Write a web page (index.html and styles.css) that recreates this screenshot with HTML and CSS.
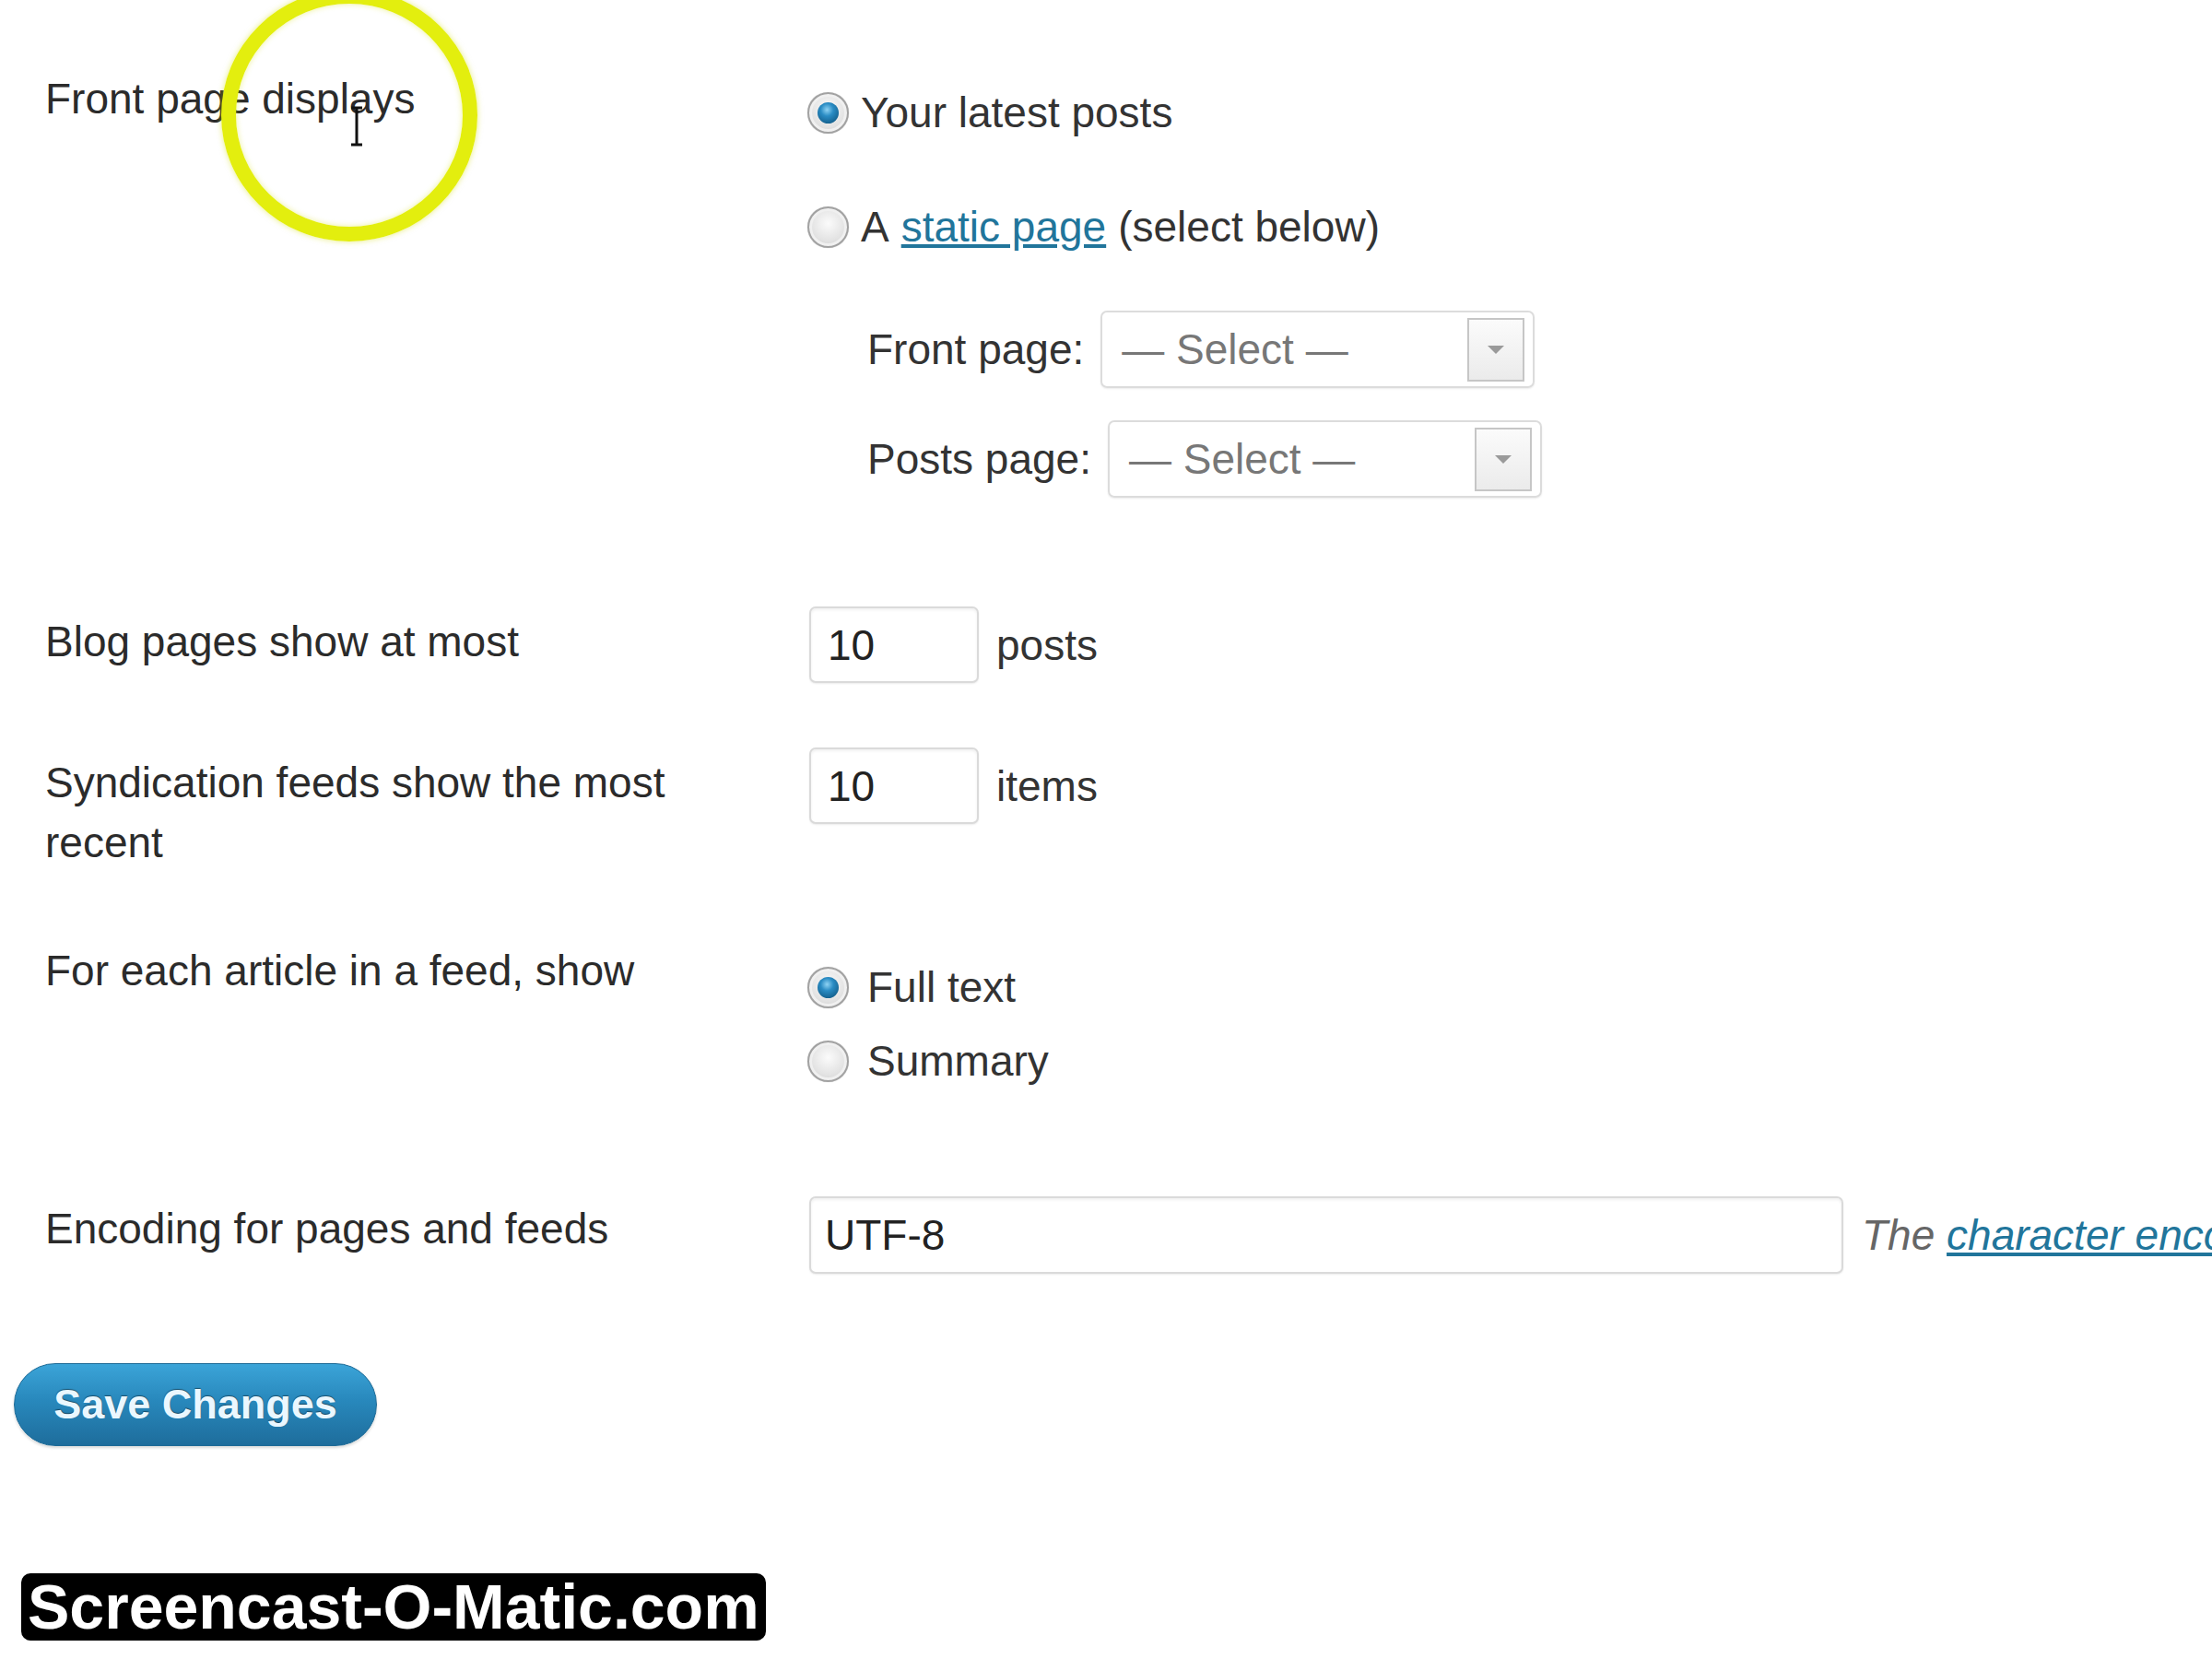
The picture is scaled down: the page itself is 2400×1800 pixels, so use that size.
FILE: index.html
```html
<!DOCTYPE html>
<html lang="en">
<head>
    <meta charset="UTF-8">
    <title>Reading Settings</title>
    <link rel="stylesheet" href="styles.css">
</head>
<body>
    <div class="cursor-ring"></div>
    <svg class="ibeam" width="16" height="44" viewBox="0 0 16 44">
        <path d="M2 2h12M8 2v40M2 42h12" stroke="#111" stroke-width="3" fill="none"/>
    </svg>

    <form class="settings">
        <div class="row row-front">
            <div class="label">Front page displays</div>
            <div class="field">
                <label class="choice"><span class="radio checked"></span>Your latest posts</label>
                <label class="choice second"><span class="radio"></span>A <a href="#">static page</a> (select below)</label>
                <div class="page-select first">
                    <span>Front page:</span>
                    <div class="select">— Select —<span class="arrow"></span></div>
                </div>
                <div class="page-select">
                    <span>Posts page:</span>
                    <div class="select">— Select —<span class="arrow"></span></div>
                </div>
            </div>
        </div>

        <div class="row row-blog">
            <div class="label">Blog pages show at most</div>
            <div class="field inline">
                <div class="input small">10</div>
                <span>posts</span>
            </div>
        </div>

        <div class="row row-feeds">
            <div class="label">Syndication feeds show the most recent</div>
            <div class="field inline">
                <div class="input small">10</div>
                <span>items</span>
            </div>
        </div>

        <div class="row row-article">
            <div class="label">For each article in a feed, show</div>
            <div class="field">
                <label class="choice wide"><span class="radio checked"></span>Full text</label>
                <label class="choice wide"><span class="radio"></span>Summary</label>
            </div>
        </div>

        <div class="row row-encoding">
            <div class="label">Encoding for pages and feeds</div>
            <div class="field inline">
                <div class="input large">UTF-8</div>
                <span class="description">The <a href="#">character encoding</a> of your site (UTF-8 is recommended)</span>
            </div>
        </div>

        <button type="button" class="save">Save Changes</button>
    </form>

    <div class="watermark">Screencast-O-Matic.com</div>
</body>
</html>
```

FILE: styles.css
```css
html, body {
    margin: 0;
    padding: 0;
    overflow: hidden;
}

body {
    font-family: "Liberation Sans", Arial, sans-serif;
    font-size: 46px;
    color: #333;
    background: #fff;
    width: 2400px;
    height: 1800px;
    position: relative;
}

a {
    color: #21759b;
    text-decoration: underline;
}

.settings {
    padding-top: 75px;
}

.row {
    display: grid;
    grid-template-columns: 780px 1fr;
    column-gap: 49px;
    padding-left: 49px;
    align-items: start;
}

.label {
    line-height: 65px;
    color: #2b2b2b;
}

.field {
    white-space: nowrap;
}

.field.inline {
    display: flex;
    align-items: center;
    gap: 19px;
}

/* radios */
.choice {
    display: flex;
    align-items: center;
    height: 80px;
    gap: 13px;
    margin-left: -2px;
}

.choice.second {
    margin-top: 44px;
}

.choice.wide {
    gap: 20px;
}

.radio {
    width: 45px;
    height: 45px;
    box-sizing: border-box;
    border-radius: 50%;
    border: 2px solid #a2a2a2;
    background: radial-gradient(circle at 50% 40%, #fbfbfb 0%, #e2e2e2 60%, #c6c6c6 100%);
    box-shadow: inset 0 0 0 3px #f0f0f0, 0 0 1px rgba(0, 0, 0, 0.3);
    position: relative;
    flex: none;
}

.radio.checked::after {
    content: "";
    position: absolute;
    left: 9px;
    top: 9px;
    width: 23px;
    height: 23px;
    border-radius: 50%;
    background: radial-gradient(circle at 45% 35%, #8fd3f4 0%, #2a8cc4 35%, #135f8c 80%, #0d4566 100%);
}

/* page selects */
.page-select {
    display: flex;
    align-items: center;
    gap: 18px;
    margin-left: 63px;
    margin-top: 35px;
}

.page-select.first {
    margin-top: 51px;
}

.select {
    width: 471px;
    height: 84px;
    box-sizing: border-box;
    border: 2px solid #dcdcdc;
    border-radius: 7px;
    display: flex;
    align-items: center;
    justify-content: space-between;
    padding: 0 9px 0 21px;
    color: #777;
    box-shadow: 0 1px 2px rgba(0, 0, 0, 0.08);
}

.arrow {
    width: 62px;
    height: 69px;
    box-sizing: border-box;
    border: 2px solid #c6c6c6;
    background: linear-gradient(#fbfbfb, #ebebeb);
    display: flex;
    align-items: center;
    justify-content: center;
}

.arrow::after {
    content: "";
    border-left: 9px solid transparent;
    border-right: 9px solid transparent;
    border-top: 9px solid #9a9a9a;
}

/* text inputs */
.input {
    height: 83px;
    box-sizing: border-box;
    border: 2px solid #dadada;
    border-radius: 7px;
    display: flex;
    align-items: center;
    color: #222;
    box-shadow: inset 0 2px 3px rgba(0, 0, 0, 0.06), 0 1px 2px rgba(0, 0, 0, 0.08);
    background: #fff;
}

.input.small {
    width: 184px;
    padding-left: 18px;
}

.input.large {
    width: 1122px;
    height: 84px;
    padding-left: 15px;
}

.description {
    font-style: italic;
    color: #666;
    margin-left: 1px;
}

.row-front .field {
    padding-top: 7px;
}

.row-blog {
    margin-top: 118px;
}

.row-blog .label,
.row-feeds .label {
    padding-top: 6px;
}

.row-feeds {
    margin-top: 70px;
}

.row-article {
    margin-top: 74px;
}

.row-article .field {
    padding-top: 10px;
}

.row-encoding {
    margin-top: 107px;
}

.row-encoding .label {
    padding-top: 3px;
}

/* button */
.save {
    display: block;
    margin: 97px 0 0 15px;
    width: 394px;
    height: 90px;
    border-radius: 45px;
    border: 1px solid #1d6a96;
    background: linear-gradient(to bottom, #3ba4d8 0%, #2888bc 45%, #1e6d9c 100%);
    color: #eaf7ff;
    font-family: "Liberation Sans", Arial, sans-serif;
    font-size: 45px;
    font-weight: bold;
    text-shadow: 0 -1px 1px rgba(0, 0, 0, 0.45);
    box-shadow: 0 2px 3px rgba(0, 0, 0, 0.15);
    padding: 0;
}

/* overlays */
.cursor-ring {
    position: absolute;
    left: 240px;
    top: -12px;
    width: 278px;
    height: 274px;
    box-sizing: border-box;
    border: 16px solid #e3ee0e;
    border-radius: 50%;
    box-shadow: 0 0 6px rgba(210, 220, 0, 0.5), inset 0 0 6px rgba(210, 220, 0, 0.4);
}

.ibeam {
    position: absolute;
    left: 379px;
    top: 115px;
}

.watermark {
    position: absolute;
    left: 23px;
    top: 1707px;
    height: 73px;
    line-height: 73px;
    padding: 0 7px;
    background: #000;
    color: #fff;
    font-weight: bold;
    font-size: 68px;
    border-radius: 10px;
}
```
